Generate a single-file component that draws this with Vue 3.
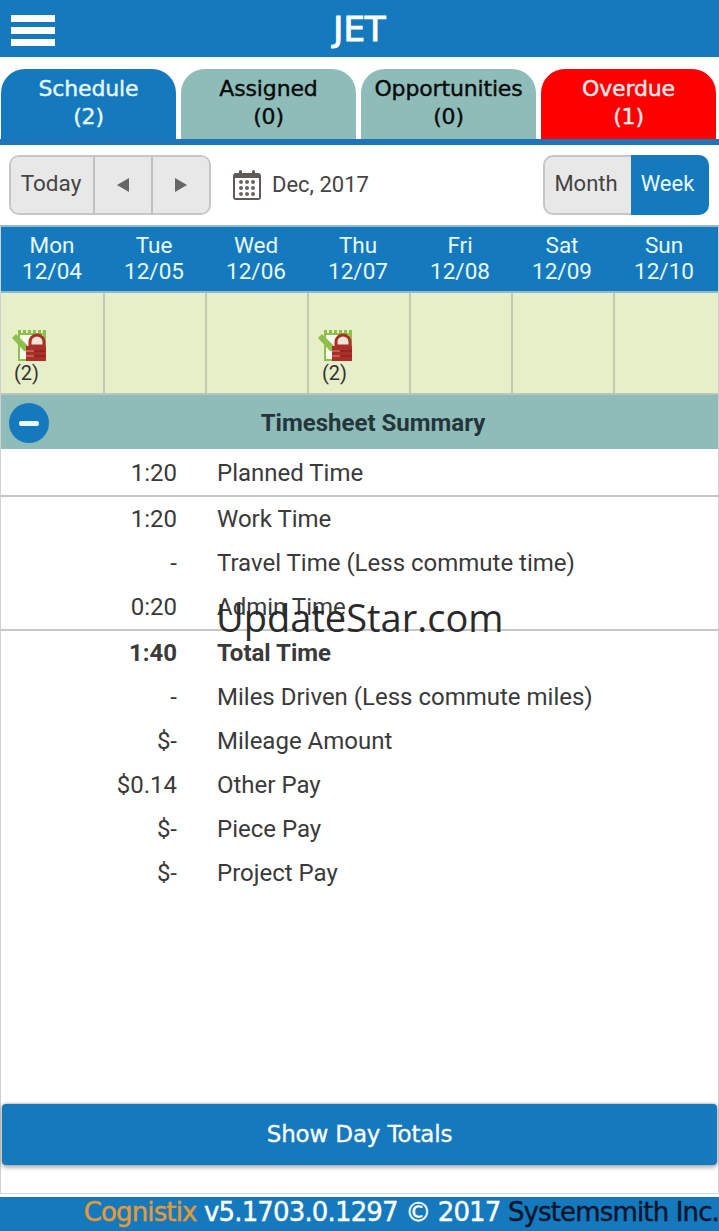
<template>
  <div class="page">
    <header class="topbar">
      <button class="menu-btn" aria-label="Menu"><span></span><span></span><span></span></button>
      <h1>JET</h1>
    </header>

    <nav class="tabs">
      <div v-for="tab in tabs" :key="tab.name" class="tab" :class="tab.kind">
        <div>{{ tab.name }}</div>
        <div>({{ tab.count }})</div>
      </div>
    </nav>

    <div class="toolbar">
      <div class="btn-group">
        <button class="btn today">Today</button>
        <button class="btn arrow"><i class="tri left"></i></button>
        <button class="btn arrow"><i class="tri right"></i></button>
      </div>
      <svg class="cal-icon" width="28" height="30" viewBox="0 0 28 30">
        <path fill="#5f5a58" d="M3 3h3V1.500a1.500 1.500 0 0 1 3 0V3h10V1.500a1.500 1.500 0 0 1 3 0V3h3a3 3 0 0 1 3 3v21a3 3 0 0 1-3 3H3a3 3 0 0 1-3-3V6a3 3 0 0 1 3-3z" />
        <rect x="2" y="8" width="24" height="20" fill="#fff" />
        <g fill="#6a6563">
          <template v-for="y in [12, 18, 24]" :key="y">
            <circle v-for="x in [8, 14, 20]" :key="x" :cx="x" :cy="y" r="2" />
          </template>
        </g>
      </svg>
      <span class="month-label">Dec, 2017</span>
      <div class="view-group">
        <button class="view">Month</button>
        <button class="view active">Week</button>
      </div>
    </div>

    <div class="content">
      <div class="week-head">
        <div v-for="d in days" :key="d.name" class="day">
          <div>{{ d.name }}</div>
          <div>{{ d.date }}</div>
        </div>
      </div>

      <div class="week-cells">
        <div v-for="d in days" :key="d.name" class="cell">
          <template v-if="d.count">
            <svg class="note-icon" :style="{ marginLeft: d.iconLeft + 'px' }" width="34" height="33" viewBox="0 0 34 33">
              <rect x="6" y="2" width="28" height="31" fill="#8cc04b" />
              <rect x="8" y="7" width="23" height="24" fill="#f7f9ee" />
              <g fill="#e6efc8">
                <rect x="9" y="0" width="2" height="5" /><rect x="14" y="0" width="2" height="5" />
                <rect x="19" y="0" width="2" height="5" /><rect x="24" y="0" width="2" height="5" />
                <rect x="29" y="0" width="2" height="5" />
              </g>
              <path fill="#8cc04b" d="M0 10l4-4 15 15-2 3-5-1z" />
              <path fill="#f3e3d8" stroke="#a92f28" stroke-width="3" d="M18 18v-4a7 7 0 0 1 14 0v4z" />
              <rect x="14" y="18" width="20" height="15" fill="#a92f28" />
              <path stroke="#d8907f" stroke-width="1" d="M14 23h8M14 28h8" />
              <path stroke="#7f1f1a" stroke-width="1" d="M22 23h12M22 28h12" />
            </svg>
            <div class="count" :style="{ marginLeft: d.countLeft + 'px' }">({{ d.count }})</div>
          </template>
        </div>
      </div>

      <div class="summary-head">
        <span class="collapse"><i></i></span>
        <span class="summary-title">Timesheet Summary</span>
      </div>

      <div class="rows">
        <div v-for="row in rows" :key="row.label" class="row" :class="{ bold: row.bold, planned: row.planned, ruled: row.ruled }">
          <span class="val">{{ row.value }}</span>
          <span class="lbl">{{ row.label }}</span>
        </div>
        <div class="watermark">UpdateStar.com</div>
      </div>

      <div class="totals-wrap">
        <button class="totals">Show Day Totals</button>
      </div>
    </div>

    <footer class="footer">
      <span class="brand">Cognistix</span> v5.1703.0.1297 © 2017 <span class="company">Systemsmith Inc.</span>
    </footer>
  </div>
</template>

<script setup>
const tabs = [
  { name: 'Schedule', count: 2, kind: 'blue' },
  { name: 'Assigned', count: 0, kind: 'teal' },
  { name: 'Opportunities', count: 0, kind: 'teal' },
  { name: 'Overdue', count: 1, kind: 'red' },
]

const days = [
  { name: 'Mon', date: '12/04', count: 2, iconLeft: 11, countLeft: 13 },
  { name: 'Tue', date: '12/05' },
  { name: 'Wed', date: '12/06' },
  { name: 'Thu', date: '12/07', count: 2, iconLeft: 9, countLeft: 13 },
  { name: 'Fri', date: '12/08' },
  { name: 'Sat', date: '12/09' },
  { name: 'Sun', date: '12/10' },
]

const rows = [
  { value: '1:20', label: 'Planned Time', planned: true },
  { value: '1:20', label: 'Work Time' },
  { value: '-', label: 'Travel Time (Less commute time)' },
  { value: '0:20', label: 'Admin Time', ruled: true },
  { value: '1:40', label: 'Total Time', bold: true },
  { value: '-', label: 'Miles Driven (Less commute miles)' },
  { value: '$-', label: 'Mileage Amount' },
  { value: '$0.14', label: 'Other Pay' },
  { value: '$-', label: 'Piece Pay' },
  { value: '$-', label: 'Project Pay' },
]
</script>

<style>
html, body {
  margin: 0;
  background: #fff;
}
</style>

<style scoped>
.page {
  width: 719px;
  height: 1231px;
  display: flex;
  flex-direction: column;
  font-family: Roboto, "Liberation Sans", sans-serif;
  color: #333;
  background: #fff;
  overflow: hidden;
}

button {
  font-family: inherit;
  padding: 0;
  border: 0;
}

.topbar {
  height: 57px;
  flex-shrink: 0;
  background: #1579bd;
  position: relative;
  display: flex;
  align-items: center;
  justify-content: center;
}

.topbar h1 {
  margin: 0;
  padding-top: 1px;
  font-family: "DejaVu Sans", sans-serif;
  font-size: 34px;
  font-weight: 400;
  color: #fff;
  -webkit-text-stroke: 1px #fff;
}

.menu-btn {
  position: absolute;
  left: 11px;
  top: 15px;
  width: 44px;
  display: flex;
  flex-direction: column;
  gap: 5px;
  background: none;
}

.menu-btn span {
  display: block;
  height: 7px;
  background: #fff;
}

.tabs {
  margin-top: 12px;
  height: 76px;
  flex-shrink: 0;
  display: flex;
  gap: 5px;
  padding: 0 3px 0 1px;
  border-bottom: 6px solid #1f75b8;
  box-sizing: border-box;
}

.tab {
  flex: 1;
  height: 70px;
  border-radius: 24px 24px 0 0;
  text-align: center;
  font-family: "DejaVu Sans", sans-serif;
  font-size: 22px;
  line-height: 28px;
  padding-top: 6px;
  box-sizing: border-box;
  letter-spacing: -0.15px;
  -webkit-text-stroke: 0.4px currentColor;
}

.tab.blue { background: #1579bd; color: #e8f8ff; }
.tab.teal { background: #8ebcb9; color: #0a0a0a; }
.tab.red { background: #fe0000; color: #ffeaea; }

.toolbar {
  height: 80px;
  flex-shrink: 0;
  display: flex;
  align-items: center;
  padding: 0 10px 1px 9px;
  box-sizing: border-box;
}

.btn-group {
  display: flex;
  height: 60px;
  border: 2px solid #c6c6c6;
  border-radius: 10px;
  background: #e8e8e8;
  box-sizing: border-box;
  overflow: hidden;
}

.btn {
  background: #e8e8e8;
  color: #444;
  font-size: 22.500px;
  height: 100%;
}

.today {
  width: 84px;
  border-right: 2px solid #c0c0c0;
  padding-bottom: 4px;
  padding-right: 2px;
}

.arrow {
  width: 58px;
  border-right: 2px solid #c0c0c0;
  display: flex;
  align-items: center;
  justify-content: center;
}

.arrow:last-child {
  width: 56px;
  border-right: 0;
}

.tri {
  width: 0;
  height: 0;
  border-top: 7px solid transparent;
  border-bottom: 7px solid transparent;
}

.tri.left { border-right: 12px solid #666; }
.tri.right { border-left: 12px solid #666; }

.cal-icon {
  margin-left: 22px;
  flex-shrink: 0;
}

.month-label {
  margin-left: 11px;
  font-size: 22px;
  color: #444;
}

.view-group {
  margin-left: auto;
  display: flex;
  height: 60px;
}

.view {
  font-size: 22px;
  height: 60px;
  box-sizing: border-box;
  padding-bottom: 2px;
}

.view:first-child {
  width: 88px;
  background: #e8e8e8;
  color: #444;
  border: 2px solid #c6c6c6;
  border-right: 0;
  border-radius: 10px 0 0 10px;
  padding-right: 4px;
}

.view.active {
  width: 78px;
  background: #1579bd;
  color: #e8f8ff;
  border-radius: 0 10px 10px 0;
  padding-right: 5px;
}

.content {
  flex: 1;
  display: flex;
  flex-direction: column;
  border-left: 1px solid #d0d0d0;
  border-right: 1px solid #d0d0d0;
  border-top: 2px solid #8fb9cf;
  margin-bottom: 3px;
  border-bottom: 1px solid #c5e3e3;
  min-height: 0;
}

.week-head {
  height: 64px;
  flex-shrink: 0;
  display: grid;
  grid-template-columns: repeat(7, 102px);
  background: #1579bd;
  color: #e8f8ff;
  border-bottom: 2px solid #8fb9cf;
}

.day {
  text-align: center;
  font-size: 22.500px;
  line-height: 26px;
  padding-top: 5px;
}

.week-cells {
  height: 100px;
  flex-shrink: 0;
  display: grid;
  grid-template-columns: 104px repeat(5, 102px) 1fr;
  background: #e6efc8;
}

.cell {
  border-right: 2px solid #c4c9b4;
  padding-top: 35px;
  box-sizing: border-box;
}

.cell:last-child {
  border-right: 0;
}

.note-icon {
  display: block;
}

.count {
  font-size: 20px;
  line-height: 22px;
  color: #333;
  margin-top: 1px;
}

.summary-head {
  height: 56px;
  flex-shrink: 0;
  position: relative;
  display: flex;
  align-items: center;
  justify-content: center;
  background: #8ebcb9;
  border-top: 2px solid #bcc3bd;
  box-sizing: border-box;
  padding-top: 2px;
}

.summary-title {
  font-size: 24px;
  font-weight: 700;
  color: #25353a;
  margin-left: 27px;
}

.collapse {
  position: absolute;
  left: 8px;
  top: 8px;
  width: 40px;
  height: 40px;
  border-radius: 50%;
  background: #1579bd;
  display: flex;
  align-items: center;
  justify-content: center;
}

.collapse i {
  width: 20px;
  height: 5px;
  border-radius: 2px;
  background: #e8f8ff;
}

.rows {
  position: relative;
  flex: 1;
}

.row {
  height: 44px;
  display: flex;
  align-items: center;
  font-size: 24px;
  color: #3a3a3a;
  box-sizing: border-box;
}

.row.planned {
  height: 48px;
  border-bottom: 2px solid #c6c6c6;
  padding-top: 2px;
}

.row.ruled {
  border-bottom: 2px solid #c6c6c6;
  height: 46px;
}

.row.bold {
  font-weight: 700;
}

.val {
  width: 176px;
  text-align: right;
  flex-shrink: 0;
}

.lbl {
  margin-left: 40px;
}

.watermark {
  position: absolute;
  left: 215px;
  top: 143px;
  font-family: "Open Sans", sans-serif;
  font-size: 38px;
  line-height: 50px;
  color: #2a2a2a;
  pointer-events: none;
}

.totals-wrap {
  padding: 0 1px 28px 1px;
  flex-shrink: 0;
}

.totals {
  display: block;
  width: 100%;
  height: 61px;
  background: #1579bd;
  color: #fff;
  font-family: "DejaVu Sans", sans-serif;
  font-size: 23px;
  letter-spacing: -0.15px;
  padding-bottom: 2px;
  -webkit-text-stroke: 0.3px #fff;
  border-radius: 4px;
  box-shadow: 0 2px 5px rgba(0, 0, 0, 0.4), 0 -1px 2px rgba(0, 0, 0, 0.15);
}

.footer {
  height: 34px;
  flex-shrink: 0;
  background: #1579bd;
  color: #fff;
  font-family: "DejaVu Sans", sans-serif;
  font-size: 26px;
  line-height: 31px;
  text-align: right;
  white-space: nowrap;
  letter-spacing: -0.85px;
  -webkit-text-stroke: 0.4px currentColor;
}

.brand { color: #e69a36; }
.company { color: #06142c; }
</style>
